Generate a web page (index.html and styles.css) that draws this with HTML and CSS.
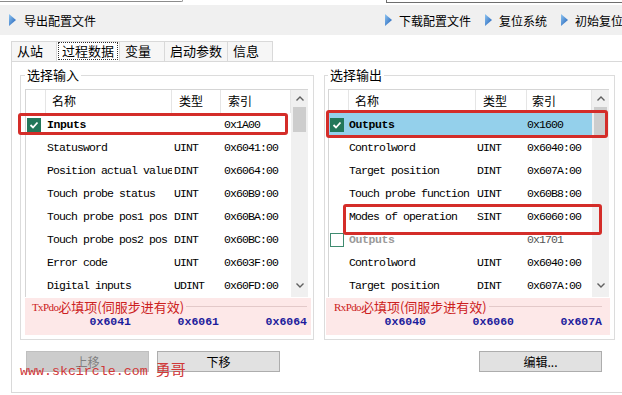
FILE: index.html
```html
<!DOCTYPE html>
<html lang="zh-CN">
<head>
    <meta charset="UTF-8">
    <title>过程数据</title>
    <link rel="stylesheet" href="styles.css">
</head>
<body>
<div class="TopStrip">
    <div class="EdgeLeft"></div>
    <div class="EdgeRight"></div>
</div>

<div class="Toolbar">
    <span class="Tool">
        <svg class="Arrow" width="7" height="12" viewBox="0 0 7 12">
            <defs>
                <linearGradient id="arrowBlue" x1="0" y1="0" x2="1" y2="1">
                    <stop offset="0" stop-color="#8fc6f2"/>
                    <stop offset="1" stop-color="#1c5cb6"/>
                </linearGradient>
            </defs>
            <polygon points="0,0 7,6 0,12" fill="url(#arrowBlue)"/>
        </svg>导出配置文件</span>
    <span class="ToolGroup">
        <span class="Tool"><svg class="Arrow" width="7" height="12" viewBox="0 0 7 12"><polygon points="0,0 7,6 0,12" fill="url(#arrowBlue)"/></svg>下载配置文件</span>
        <span class="Tool"><svg class="Arrow" width="7" height="12" viewBox="0 0 7 12"><polygon points="0,0 7,6 0,12" fill="url(#arrowBlue)"/></svg>复位系统</span>
        <span class="Tool"><svg class="Arrow" width="7" height="12" viewBox="0 0 7 12"><polygon points="0,0 7,6 0,12" fill="url(#arrowBlue)"/></svg>初始复位</span>
    </span>
</div>

<div class="Tabs">
    <span class="Tab">从站</span>
    <span class="Tab Active"><span class="Focus">过程数据</span></span>
    <span class="Tab">变量</span>
    <span class="Tab">启动参数</span>
    <span class="Tab">信息</span>
</div>

<div class="Page">
    <div class="Groups">
        <!-- inputs (TxPdo) -->
        <fieldset class="Group GroupIn">
            <legend>选择输入</legend>
            <div class="List ListIn">
                <div class="ListBody">
                    <div class="Row Head"><span></span><span>名称</span><span>类型</span><span>索引</span></div>
                    <div class="Row Pdo">
                        <span class="Check On"><svg width="14" height="14" viewBox="0 0 14 14"><polyline points="3.5,7 6,9.5 10.5,4.5" fill="none" stroke="#fff" stroke-width="1.8"/></svg></span>
                        <span class="Name">Inputs</span><span class="Type"></span><span class="Index">0x1A00</span>
                    </div>
                    <div class="Row"><span></span><span class="Name">Statusword</span><span class="Type">UINT</span><span class="Index">0x6041:00</span></div>
                    <div class="Row"><span></span><span class="Name">Position actual value</span><span class="Type">DINT</span><span class="Index">0x6064:00</span></div>
                    <div class="Row"><span></span><span class="Name">Touch probe status</span><span class="Type">UINT</span><span class="Index">0x60B9:00</span></div>
                    <div class="Row"><span></span><span class="Name">Touch probe pos1 pos</span><span class="Type">DINT</span><span class="Index">0x60BA:00</span></div>
                    <div class="Row"><span></span><span class="Name">Touch probe pos2 pos</span><span class="Type">DINT</span><span class="Index">0x60BC:00</span></div>
                    <div class="Row"><span></span><span class="Name">Error code</span><span class="Type">UINT</span><span class="Index">0x603F:00</span></div>
                    <div class="Row"><span></span><span class="Name">Digital inputs</span><span class="Type">UDINT</span><span class="Index">0x60FD:00</span></div>
                </div>
                <div class="ScrollBar">
                    <span class="ScrollBtn"><svg width="8" height="5" viewBox="0 0 8 5"><polyline points="0.5,4.5 4,1 7.5,4.5" fill="none" stroke="#606060" stroke-width="1.4"/></svg></span>
                    <span class="Thumb"></span>
                    <span class="ScrollFill"></span>
                    <span class="ScrollBtn Down"><svg width="8" height="5" viewBox="0 0 8 5"><polyline points="0.5,0.5 4,4 7.5,0.5" fill="none" stroke="#606060" stroke-width="1.4"/></svg></span>
                </div>
                <div class="Mark MarkInputs"></div>
            </div>
            <div class="Required">
                <div class="RequiredTitle"><span class="PdoName">TxPdo</span>必填项(伺服步进有效)</div>
                <div class="RequiredValues"><span>0x6041</span><span>0x6061</span><span>0x6064</span></div>
            </div>
        </fieldset>

        <!-- outputs (RxPdo) -->
        <fieldset class="Group GroupOut">
            <legend>选择输出</legend>
            <div class="List ListOut">
                <div class="ListBody">
                    <div class="Row Head"><span></span><span>名称</span><span>类型</span><span class="HeadIndex">索引</span></div>
                    <div class="Row Pdo Selected">
                        <span class="Check On"><svg width="14" height="14" viewBox="0 0 14 14"><polyline points="3.5,7 6,9.5 10.5,4.5" fill="none" stroke="#fff" stroke-width="1.8"/></svg></span>
                        <span class="Name">Outputs</span><span class="Type"></span><span class="Index">0x1600</span>
                    </div>
                    <div class="Row"><span></span><span class="Name">Controlword</span><span class="Type">UINT</span><span class="Index">0x6040:00</span></div>
                    <div class="Row"><span></span><span class="Name">Target position</span><span class="Type">DINT</span><span class="Index">0x607A:00</span></div>
                    <div class="Row"><span></span><span class="Name">Touch probe function</span><span class="Type">UINT</span><span class="Index">0x60B8:00</span></div>
                    <div class="Row"><span></span><span class="Name">Modes of operation</span><span class="Type">SINT</span><span class="Index">0x6060:00</span></div>
                    <div class="Row Pdo Unused">
                        <span class="Check Off"></span>
                        <span class="Name">Outputs</span><span class="Type"></span><span class="Index">0x1701</span>
                    </div>
                    <div class="Row"><span></span><span class="Name">Controlword</span><span class="Type">UINT</span><span class="Index">0x6040:00</span></div>
                    <div class="Row"><span></span><span class="Name">Target position</span><span class="Type">DINT</span><span class="Index">0x607A:00</span></div>
                </div>
                <div class="ScrollBar">
                    <span class="ScrollBtn"><svg width="8" height="5" viewBox="0 0 8 5"><polyline points="0.5,4.5 4,1 7.5,4.5" fill="none" stroke="#606060" stroke-width="1.4"/></svg></span>
                    <span class="Thumb ThumbOut"></span>
                    <span class="ScrollFill"></span>
                    <span class="ScrollBtn Down"><svg width="8" height="5" viewBox="0 0 8 5"><polyline points="0.5,0.5 4,4 7.5,0.5" fill="none" stroke="#606060" stroke-width="1.4"/></svg></span>
                </div>
                <div class="Mark MarkOutputs"></div>
                <div class="Mark MarkModes"></div>
            </div>
            <div class="Required RequiredOut">
                <div class="RequiredTitle"><span class="PdoName">RxPdo</span>必填项(伺服步进有效)</div>
                <div class="RequiredValues"><span>0x6040</span><span>0x6060</span><span>0x607A</span></div>
            </div>
        </fieldset>
    </div>

    <div class="Buttons">
        <button class="Button" disabled>上移</button>
        <button class="Button">下移</button>
        <button class="Button ButtonEdit">编辑...</button>
    </div>

    <div class="Watermark">www.skcircle.com <span class="WatermarkName">勇哥</span></div>
</div>
</body>
</html>
```

FILE: styles.css
```css
body {
    margin: 0;
    width: 622px;
    height: 395px;
    overflow: hidden;
    background: #fff;
    color: #000;
    font-family: "Noto Sans CJK SC", sans-serif;
    font-size: 12px;
}

/* edges of the controls above the toolbar */
.TopStrip {
    height: 5px;
    display: flex;
    justify-content: space-between;
}

.TopStrip .EdgeLeft {
    width: 182px;
    height: 1px;
    border-bottom: 1px solid #8c8c8c;
    border-right: 1px solid #8c8c8c;
    border-bottom-right-radius: 3px;
}

.TopStrip .EdgeRight {
    width: 235px;
    height: 2px;
    border-left: 1px solid #6e6e6e;
    border-bottom: 1px solid #6e6e6e;
}

.Toolbar {
    height: 30px;
    background: #f0f0f0;
    display: flex;
    align-items: center;
    padding-left: 9px;
    white-space: nowrap;
}

.Toolbar .Tool {
    display: flex;
    align-items: center;
    gap: 8px;
}

.Toolbar .ToolGroup {
    display: flex;
    gap: 14px;
    margin-left: 289px;
}

.Toolbar .ToolGroup .Tool {
    gap: 7px;
}

.Tabs {
    display: flex;
    margin-top: 6px;
    padding-left: 11px;
    height: 20px;
}

.Tabs .Tab {
    box-sizing: border-box;
    min-width: 46px;
    height: 20px;
    padding: 0 5px;
    border: 1px solid #d9d9d9;
    border-bottom: none;
    margin-right: -1px;
    background: #f6f6f6;
    font-size: 13px;
    line-height: 18px;
}

.Tabs .Tab.Active {
    background: #fff;
    padding: 0 1px;
}

.Tabs .Tab .Focus {
    display: block;
    border: 1px dotted #333;
    padding: 0 3px;
    line-height: 16px;
}

.Page {
    position: relative;
    box-sizing: border-box;
    height: 332px;
    margin-left: 11px;
    border-top: 1px solid #d9d9d9;
    border-left: 1px solid #d9d9d9;
    border-bottom: 1px solid #d9d9d9;
}

.Groups {
    display: flex;
    gap: 10px;
    padding: 5px 0 0 8px;
}

.Group {
    box-sizing: border-box;
    margin: 0;
    min-width: 0;
    border: 1px solid #dcdcdc;
    padding: 6px 4px 4px 4px;
}

.GroupIn {
    width: 294px;
}

.GroupOut {
    width: 291px;
    padding-left: 3px;
}

.Group legend {
    padding: 0 2px;
    font-size: 13px;
    line-height: 16px;
}

.List {
    position: relative;
    display: flex;
    box-sizing: border-box;
    height: 208px;
    border-top: 1px solid #d5d5d5;
    border-left: 1px solid #d5d5d5;
    font-family: "Liberation Mono", monospace;
    font-size: 11.5px;
    letter-spacing: -0.9px;
}

.ListIn {
    width: 283px;
}

.ListOut {
    width: 281px;
}

.ListBody {
    flex: 1;
}

.Row {
    display: grid;
    height: 23px;
    align-items: center;
    white-space: nowrap;
}

.ListIn .Row {
    grid-template-columns: 20px 126px 49px 1fr;
}

.ListOut .Row {
    grid-template-columns: 20px 127px 51px 1fr;
}

.Row span {
    overflow: hidden;
}

.ListIn .Name { padding-left: 1px; }
.ListIn .Type { padding-left: 2px; }
.ListIn .Index { padding-left: 3px; }
.ListOut .Name { padding-left: 0; }
.ListOut .Type { padding-left: 1px; }
.ListOut .Index { padding-left: 0; }

.Row.Head {
    font-family: "Noto Sans CJK SC", sans-serif;
    font-size: 12px;
    letter-spacing: 0;
}

.Row.Head span {
    box-sizing: border-box;
    height: 23px;
    line-height: 22px;
    padding-left: 7px;
    border-right: 1px solid #e5e5e5;
}

.Row.Head span:nth-child(2) {
    padding-left: 6px;
}

.ListOut .Row.Head .HeadIndex {
    padding-left: 5px;
}

.Row.Pdo .Name {
    font-weight: bold;
    letter-spacing: -0.4px;
}

.Row.Selected {
    background: #94d0eb;
}

.Row.Unused .Name {
    color: #9a9a9a;
}

.Row.Unused .Index {
    color: #555;
}

.Check {
    box-sizing: border-box;
    width: 14px;
    height: 14px;
    margin-left: 1px;
}

.Check svg {
    display: block;
}

.Check.On {
    background: #22775a;
}

.Check.Off {
    background: #fff;
    border: 1px solid #3f8b70;
}

.ScrollBar {
    width: 17px;
    display: flex;
    flex-direction: column;
    background: #f0f0f0;
}

.ScrollBar .ScrollBtn {
    height: 17px;
    display: flex;
    align-items: center;
    justify-content: center;
}

.ScrollBar .ScrollBtn.Down {
    margin-bottom: 3px;
}

.ScrollBar .Thumb {
    height: 25px;
    margin: 0 2px;
    background: #cdcdcd;
}

.ScrollBar .ThumbOut {
    height: 28px;
}

.ScrollBar .ScrollFill {
    flex: 1;
}

/* red annotation frames drawn over the lists */
.Mark {
    position: absolute;
    box-sizing: border-box;
    border: 3px solid #d42d29;
    border-radius: 3px;
}

.MarkInputs {
    left: -8px;
    top: 23px;
    width: 270px;
    height: 22px;
}

.MarkOutputs {
    left: -3px;
    top: 20px;
    width: 282px;
    height: 28px;
}

.MarkModes {
    left: 14px;
    top: 114px;
    width: 259px;
    height: 31px;
}

.Required {
    box-sizing: border-box;
    width: 286px;
    height: 37px;
    margin-top: 1px;
    padding: 1px 4px 0 7px;
    background: #fde8e8;
}

.RequiredOut {
    width: 284px;
    margin-left: -2px;
    padding: 1px 8px 0 8px;
}

.RequiredTitle {
    display: flex;
    align-items: center;
    height: 15px;
    color: #cc2020;
    font-size: 13px;
    white-space: nowrap;
}

.RequiredTitle::after {
    content: "";
    flex: 1;
    margin-left: 2px;
    border-top: 1px solid #e3c9c9;
}

.RequiredTitle .PdoName {
    font-family: "Liberation Serif", serif;
    font-size: 11px;
    letter-spacing: -0.6px;
}

.RequiredValues {
    display: grid;
    grid-template-columns: repeat(3, 88px);
    justify-content: end;
    text-align: right;
    line-height: 16px;
    color: #1c1c9c;
    font-family: "Liberation Mono", monospace;
    font-weight: bold;
    font-size: 11.5px;
}

.Buttons {
    display: flex;
    gap: 8px;
    padding-left: 14px;
    margin-top: 11px;
}

.Button {
    box-sizing: border-box;
    width: 123px;
    height: 21px;
    padding: 0;
    border: 1px solid #adadad;
    background: #e1e1e1;
    color: #000;
    font-family: "Noto Sans CJK SC", sans-serif;
    font-size: 12px;
    line-height: 18px;
}

.Button:disabled {
    background: #cccccc;
    border-color: #bfbfbf;
    color: #808080;
}

.Button.ButtonEdit {
    margin-left: 191px;
}

/* the watermark is printed over the first button in the source picture */
.Watermark {
    position: absolute;
    left: 8px;
    top: 296px;
    color: #d03838;
    font-family: "Liberation Mono", monospace;
    font-size: 13.3px;
    white-space: nowrap;
}

.Watermark .WatermarkName {
    font-family: "Noto Sans CJK SC", sans-serif;
    font-size: 15px;
}
```
